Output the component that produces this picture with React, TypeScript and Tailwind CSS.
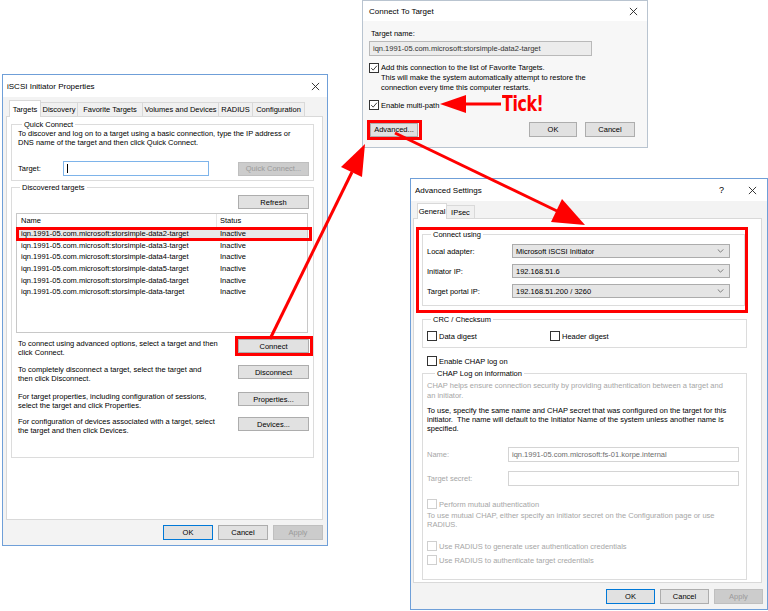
import type { ReactNode } from "react";

function CloseX() {
  return (
    <svg viewBox="0 0 10 10" className="w-[9px] h-[9px]">
      <path d="M1 1 L9 9 M9 1 L1 9" stroke="#222" strokeWidth="1" fill="none" />
    </svg>
  );
}

function Btn({ children, className = "", primary, disabled }: { children: ReactNode; className?: string; primary?: boolean; disabled?: boolean }) {
  const look = disabled
    ? "bg-[#cccccc] border-[#bfbfbf] text-[#9a9a9a]"
    : primary
      ? "bg-[#e1e1e1] border-[#0078d7] text-black"
      : "bg-[#e1e1e1] border-[#adadad] text-black";
  return <div className={`h-[14px] flex items-center justify-center border shrink-0 ${look} ${className}`}>{children}</div>;
}

function Check({ checked, disabled }: { checked?: boolean; disabled?: boolean }) {
  return (
    <span className={`w-[10px] h-[10px] border bg-white shrink-0 flex items-center justify-center ${disabled ? "border-[#cfcfcf]" : "border-[#333333]"}`}>
      {checked && (
        <svg viewBox="0 0 10 10" className="w-[8px] h-[8px]">
          <path d="M1.5 5.2 L4 7.6 L8.6 2.2" fill="none" stroke="#222" strokeWidth="1.1" />
        </svg>
      )}
    </span>
  );
}

function Select({ value }: { value: string }) {
  return (
    <div className="w-[218px] h-[14px] bg-[#e5e5e5] border border-[#acacac] flex items-center justify-between pl-[3px] pr-[5px]">
      <span>{value}</span>
      <svg viewBox="0 0 8 5" className="w-[7px] h-[4px]">
        <path d="M0.5 0.5 L4 4 L7.5 0.5" fill="none" stroke="#555" strokeWidth="0.9" />
      </svg>
    </div>
  );
}

const targets = [
  "iqn.1991-05.com.microsoft:storsimple-data2-target",
  "iqn.1991-05.com.microsoft:storsimple-data3-target",
  "iqn.1991-05.com.microsoft:storsimple-data4-target",
  "iqn.1991-05.com.microsoft:storsimple-data5-target",
  "iqn.1991-05.com.microsoft:storsimple-data6-target",
  "iqn.1991-05.com.microsoft:storsimple-data-target",
];

const tabs = [
  { t: "Discovery", w: "w-[37px]" },
  { t: "Favorite Targets", w: "w-[65px]" },
  { t: "Volumes and Devices", w: "w-[76px]" },
  { t: "RADIUS", w: "w-[34px]" },
  { t: "Configuration", w: "w-[52px]" },
];

function InitiatorWindow() {
  return (
    <div className="absolute left-[2px] top-[74px] w-[326px] h-[472px] border border-[#6f9fd8] bg-[#f3f3f3] flex flex-col">
      <div className="h-[22px] bg-white flex items-center justify-between pl-[4px] pr-[7px] shrink-0">
        <span className="text-[8px]">iSCSI Initiator Properties</span>
        <CloseX />
      </div>
      <div className="flex items-end h-[17px] pl-[6px] mt-[3px] -mb-px relative z-10">
        <div className="h-[17px] w-[32px] bg-white border border-b-0 border-[#d9d9d9] flex items-center justify-center">Targets</div>
        {tabs.map((x) => (
          <div key={x.t} className={`h-[15px] ${x.w} bg-[#f0f0f0] border border-l-0 border-[#d9d9d9] flex items-center justify-center whitespace-nowrap`}>{x.t}</div>
        ))}
      </div>
      <div className="mx-[3px] w-[317px] h-[404px] bg-white border border-[#d9d9d9] flex flex-col">
        <fieldset className="ml-[4px] w-[303px] mt-[3px] border border-[#dcdcdc] pl-[6px] pr-[4px] pb-[4px]">
          <legend className="ml-[4px] px-[2px]">Quick Connect</legend>
          <div>
            To discover and log on to a target using a basic connection, type the IP address or
            <br />
            DNS name of the target and then click Quick Connect.
          </div>
          <div className="flex items-center mt-[14px]">
            <span className="w-[45px]">Target:</span>
            <div className="w-[146px] h-[15px] border border-[#7eb4ea] bg-white flex items-center pl-[3px]">
              <span className="w-px h-[9px] bg-black" />
            </div>
            <Btn disabled className="w-[71px] ml-auto">Quick Connect...</Btn>
          </div>
        </fieldset>
        <fieldset className="ml-[4px] w-[303px] mt-[2px] h-[275px] border border-[#dcdcdc] pl-[4px] pr-[4px] flex flex-col">
          <legend className="ml-[4px] px-[2px]">Discovered targets</legend>
          <div className="flex justify-end mt-[3px]">
            <Btn className="w-[71px]">Refresh</Btn>
          </div>
          <div className="mt-[4px] w-[292px] h-[120px] border border-[#c8c8c8] bg-white">
            <div className="flex h-[13px] items-center">
              <span className="w-[200px] pl-[4px] h-full flex items-center border-r border-[#e5e5e5]">Name</span>
              <span className="pl-[3px]">Status</span>
            </div>
            <div className="mt-[1px]">
              {targets.map((t, i) => (
                <div key={t} className={`relative flex h-[11.6px] items-center ${i === 0 ? "bg-[#e8e8e8]" : ""}`}>
                  <span className="w-[200px] pl-[4px]">{t}</span>
                  <span className="pl-[3px]">Inactive</span>
                  {i === 0 && <span className="absolute -left-[1px] -right-[5px] -top-[1px] -bottom-[1px] border-[3px] border-[#ff0000]" />}
                </div>
              ))}
            </div>
          </div>
          <div className="flex justify-between items-start mt-[6px] pl-[2px]">
            <div>To connect using advanced options, select a target and then<br />click Connect.</div>
            <div className="relative">
              <Btn className="w-[71px]">Connect</Btn>
              <span className="absolute -left-[3px] -right-[4px] -top-[3px] -bottom-[3px] border-[3px] border-[#ff0000]" />
            </div>
          </div>
          <div className="flex justify-between items-start mt-[8px] pl-[2px]">
            <div>To completely disconnect a target, select the target and<br />then click Disconnect.</div>
            <Btn className="w-[71px]">Disconnect</Btn>
          </div>
          <div className="flex justify-between items-start mt-[9px] pl-[2px]">
            <div>For target properties, including configuration of sessions,<br />select the target and click Properties.</div>
            <Btn className="w-[71px]">Properties...</Btn>
          </div>
          <div className="flex justify-between items-start mt-[7px] pl-[2px]">
            <div>For configuration of devices associated with a target, select<br />the target and then click Devices.</div>
            <Btn className="w-[71px]">Devices...</Btn>
          </div>
        </fieldset>
      </div>
      <div className="flex justify-end gap-[5px] pr-[4px] mt-[5px]">
        <Btn primary className="w-[50px] h-[15px]">OK</Btn>
        <Btn className="w-[50px] h-[15px]">Cancel</Btn>
        <Btn disabled className="w-[50px] h-[15px]">Apply</Btn>
      </div>
    </div>
  );
}

function ConnectWindow() {
  return (
    <div className="absolute left-[362px] top-0 w-[286px] h-[148px] border border-[#b9c4d0] bg-[#f7f7f7] flex flex-col">
      <div className="h-[20px] bg-white flex items-center justify-between pl-[6px] pr-[9px] shrink-0">
        <span className="text-[8px]">Connect To Target</span>
        <CloseX />
      </div>
      <div className="pl-[6px] pr-[12px] flex flex-col">
        <div className="mt-[8px] pl-[2px]">Target name:</div>
        <div className="mt-[3px] w-[223px] h-[15px] border border-[#b9b9b9] bg-[#ececec] flex items-center pl-[3px] text-[#333]">
          iqn.1991-05.com.microsoft:storsimple-data2-target
        </div>
        <div className="flex items-start gap-[2px] mt-[7px] leading-[10px]">
          <Check checked />
          <div>
            Add this connection to the list of Favorite Targets.
            <br />
            This will make the system automatically attempt to restore the
            <br />
            connection every time this computer restarts.
          </div>
        </div>
        <div className="flex items-center gap-[2px] mt-[7px]">
          <Check checked />
          <span>Enable multi-path</span>
        </div>
        <div className="flex items-center mt-[12px] pl-[1px]">
          <div className="relative">
            <Btn className="w-[48px] h-[13px]">Advanced...</Btn>
            <span className="absolute -left-[3px] -right-[4px] -top-[3px] -bottom-[3px] border-[3px] border-[#ff0000]" />
          </div>
          <Btn className="w-[48px] ml-auto h-[15px]">OK</Btn>
          <Btn className="w-[50px] ml-[8px] h-[15px]">Cancel</Btn>
        </div>
      </div>
    </div>
  );
}

function AdvancedWindow() {
  return (
    <div className="absolute left-[410px] top-[178px] w-[358px] h-[432px] border border-[#6f9fd8] bg-[#f3f3f3] flex flex-col">
      <div className="h-[22px] bg-white flex items-center pl-[4px] pr-[10px] shrink-0">
        <span className="text-[8px]">Advanced Settings</span>
        <span className="ml-auto mr-[24px] text-[9px]">?</span>
        <CloseX />
      </div>
      <div className="flex items-end h-[16px] pl-[6px] mt-[2px] -mb-px relative z-10">
        <div className="h-[16px] w-[30px] bg-white border border-b-0 border-[#d9d9d9] flex items-center justify-center">General</div>
        <div className="h-[14px] w-[28px] bg-[#f0f0f0] border border-l-0 border-[#d9d9d9] flex items-center justify-center">IPsec</div>
      </div>
      <div className="ml-[2px] w-[349px] h-[365px] bg-white border border-[#d9d9d9] flex flex-col">
        <div className="ml-[2px] mt-[8px] w-[332px] h-[86px] border-[3px] border-[#ff0000]">
          <fieldset className="ml-[3px] mr-[0px] border border-[#dcdcdc] pl-[4px] pb-[7px]">
            <legend className="ml-[4px] px-[2px]">Connect using</legend>
            {[
              ["Local adapter:", "Microsoft iSCSI Initiator"],
              ["Initiator IP:", "192.168.51.6"],
              ["Target portal IP:", "192.168.51.200 / 3260"],
            ].map(([l, v], i) => (
              <div key={l} className={`flex items-center ${i === 0 ? "mt-[5px]" : "mt-[6px]"}`}>
                <span className="w-[85px]">{l}</span>
                <Select value={v} />
              </div>
            ))}
          </fieldset>
        </div>
        <fieldset className="ml-[8px] mt-[2px] w-[325px] border border-[#dcdcdc] pl-[4px] pb-[6px]">
          <legend className="ml-[4px] px-[2px]">CRC / Checksum</legend>
          <div className="flex items-center mt-[7px]">
            <div className="w-[123px] flex items-center gap-[2px]"><Check /><span>Data digest</span></div>
            <div className="flex items-center gap-[2px]"><Check /><span>Header digest</span></div>
          </div>
        </fieldset>
        <div className="ml-[13px] mt-[8px] flex items-center gap-[2px]"><Check /><span>Enable CHAP log on</span></div>
        <fieldset className="ml-[8px] mt-[3px] w-[325px] border border-[#dcdcdc] pl-[4px] pb-[14px]">
          <legend className="ml-[8px] px-[2px]">CHAP Log on information</legend>
          <div className="mt-[3px] leading-[10px] text-[#a6a6a6]">
            CHAP helps ensure connection security by providing authentication between a target and
            <br />
            an initiator.
          </div>
          <div className="mt-[5px]">
            To use, specify the same name and CHAP secret that was configured on the target for this
            <br />
            initiator.&nbsp; The name will default to the Initiator Name of the system unless another name is
            <br />
            specified.
          </div>
          <div className="flex items-center mt-[14px]">
            <span className="w-[81px] text-[#a6a6a6]">Name:</span>
            <div className="w-[231px] h-[15px] border border-[#d4d4d4] bg-white flex items-center pl-[3px] text-[#6d6d6d]">
              iqn.1991-05.com.microsoft:fs-01.korpe.internal
            </div>
          </div>
          <div className="flex items-center mt-[9px]">
            <span className="w-[81px] text-[#a6a6a6]">Target secret:</span>
            <div className="w-[231px] h-[15px] border border-[#d4d4d4] bg-white" />
          </div>
          <div className="flex items-center gap-[2px] mt-[13px] text-[#a6a6a6]"><Check disabled /><span>Perform mutual authentication</span></div>
          <div className="mt-[2px] text-[#a6a6a6]">
            To use mutual CHAP, either specify an initiator secret on the Configuration page or use
            <br />
            RADIUS.
          </div>
          <div className="flex items-center gap-[2px] mt-[12px] text-[#a6a6a6]"><Check disabled /><span>Use RADIUS to generate user authentication credentials</span></div>
          <div className="flex items-center gap-[2px] mt-[4px] text-[#a6a6a6]"><Check disabled /><span>Use RADIUS to authenticate target credentials</span></div>
        </fieldset>
      </div>
      <div className="flex justify-end gap-[5px] pr-[4px] mt-[6px]">
        <Btn primary className="w-[49px] h-[15px]">OK</Btn>
        <Btn className="w-[49px] h-[15px]">Cancel</Btn>
        <Btn disabled className="w-[49px] h-[15px]">Apply</Btn>
      </div>
    </div>
  );
}

export default function App() {
  return (
    <div className="relative w-[768px] h-[611px] overflow-hidden bg-white text-[7.5px] leading-[9px] text-black font-['Liberation_Sans',Arial,sans-serif]">
      <InitiatorWindow />
      <ConnectWindow />
      <AdvancedWindow />

      {/* red callout arrows */}
      <svg className="absolute inset-0 pointer-events-none" width="768" height="611" viewBox="0 0 768 611">
        <g fill="#ff0000" stroke="#ff0000">
          <line x1="270" y1="339" x2="352" y2="172" strokeWidth="3" />
          <polygon points="365,144 362,177 341,167" stroke="none" />
          <line x1="395" y1="133" x2="557" y2="211" strokeWidth="3" />
          <polygon points="585,225 551,222 562,199" stroke="none" />
          <line x1="462" y1="104" x2="501" y2="104" strokeWidth="3" />
          <polygon points="440,104 466,95 466,113" stroke="none" />
        </g>
      </svg>
      <div className="absolute left-[502px] top-[92px] text-[22px] leading-[24px] font-bold text-[#ff0000] tracking-[-0.5px] scale-x-[0.8] origin-left font-['Liberation_Sans_Narrow','DejaVu_Sans_Condensed',sans-serif]">
        Tick!
      </div>
    </div>
  );
}
